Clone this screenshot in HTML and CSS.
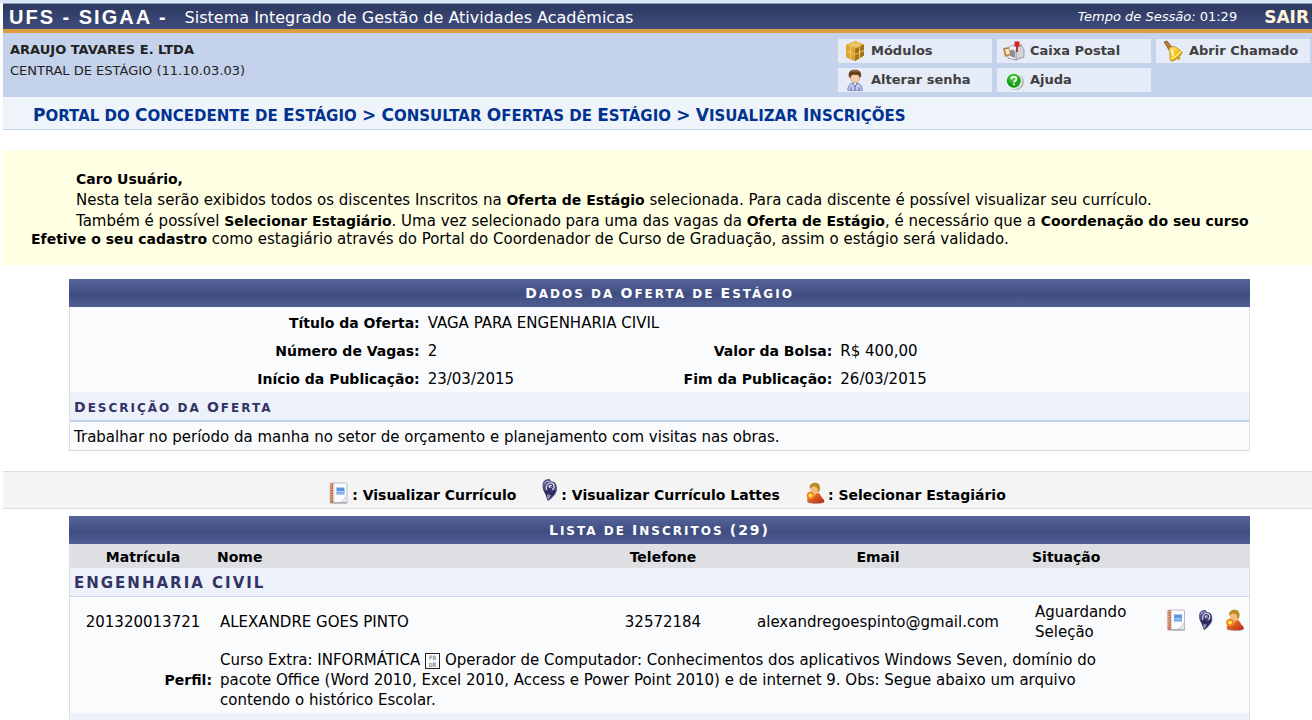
FILE: index.html
```html
<!DOCTYPE html>
<html lang="pt-BR">
<head>
<meta charset="utf-8">
<title>UFS - SIGAA</title>
<link rel="stylesheet" href="styles.css">
</head>
<body>
<svg class="defs" aria-hidden="true">
  <defs>
    <linearGradient id="gold" x1="0" y1="0" x2="1" y2="1"><stop offset="0" stop-color="#fff08a"/><stop offset=".5" stop-color="#f2c418"/><stop offset="1" stop-color="#b98300"/></linearGradient>
    <linearGradient id="violet" x1="0" y1="0" x2="1" y2="1"><stop offset="0" stop-color="#7474a4"/><stop offset=".5" stop-color="#2c2c62"/><stop offset="1" stop-color="#9d9dc0"/></linearGradient>
    <radialGradient id="green" cx=".45" cy=".3"><stop offset="0" stop-color="#5fe04a"/><stop offset="1" stop-color="#149a1c"/></radialGradient>
    <linearGradient id="red" x1="0" y1="0" x2="1" y2="1"><stop offset="0" stop-color="#f7883c"/><stop offset="1" stop-color="#b52a0c"/></linearGradient>
    <symbol id="i-note" viewBox="0 0 20 22">
      <rect x="3.5" y="1" width="15.5" height="20" rx="1" fill="#fafcff" stroke="#b9bcc6"/>
      <path d="M2 20.8h17.3" stroke="#a9abb5" stroke-width="1.4"/>
      <rect x="2" y="1" width="3.4" height="19.6" fill="#c9784f"/>
      <path d="M1 2.500h3M1 5h3M1 7.500h3M1 10h3M1 12.500h3M1 15h3M1 17.500h3" stroke="#d8c3b0" stroke-width="1"/>
      <path d="M6 2v18" stroke="#dedfe5"/>
      <rect x="8.500" y="5.500" width="8" height="7" fill="#5d93df"/>
      <path d="M9 9.500h7M9 11h7" stroke="#a9cbf5"/>
      <path d="M12.500 20l6-6.500v6.500z" fill="#e4e8ea"/>
      <path d="M12.500 19.500c3 0 4-3 6-6" fill="none" stroke="#cfd4d8"/>
    </symbol>
    <symbol id="i-lattes" viewBox="0 0 16 24">
      <path d="M1 7C1 3 4 1 7.500 1c1.500 0 1 2 3 2.500C14 4 15.500 7 15.500 11c0 5-4 8-8.500 12-2-1-2-4-2.500-7C2 13 .5 10 1 7z" fill="url(#violet)"/>
      <path d="M3 6c1-2.500 4-3.500 6-2" fill="none" stroke="#c4c4dc" stroke-width="1"/>
      <path d="M5 12C4 7 7 4.500 10 5c3.500.8 3.500 5.500.5 6.500" fill="none" stroke="#d4d4e8" stroke-width="1.300"/>
      <circle cx="9" cy="8.500" r="1.800" fill="#e8e8f4"/>
      <circle cx="9.500" cy="8.800" r=".9" fill="#26265b"/>
      <path d="M1.500 11c2 2 2.500 2.500 4.500 3 3 1 6-1 8.500-3l-1 4-5 6-2 1z" fill="#29295e"/>
      <path d="M6 16c-1 2-.5 4 .5 6 1.500-1.500 2.500-3 3-5" fill="#8a8ab0"/>
    </symbol>
    <symbol id="i-user" viewBox="0 0 20 22">
      <ellipse cx="11" cy="20" rx="8.500" ry="1.800" fill="#6f2417" opacity=".5"/>
      <path d="M2.500 20C1 15 6 10.500 11 10.500c4 0 5 3.500 6 5.500 2 1 2.500 2.500 2 4-3 1.600-13 1.600-16.500 0z" fill="url(#red)"/>
      <ellipse cx="10" cy="6.500" rx="4.700" ry="5.500" fill="#f3bd82"/>
      <path d="M5 7C3.500 3 7 .5 10.500.8c4 .3 5.500 4 4 8.200-1 1.500-2 1.200-1.800-.5C13 5 10 4.500 8 4.500 6.500 5 6 6 5 7z" fill="#bd8b24"/>
      <path d="M5.500 9l-1 6 3 2 3.500-5z" fill="#f7b06a"/>
      <circle cx="5.500" cy="13.500" r="3.800" fill="#f68322"/>
      <circle cx="5.500" cy="13.500" r="2" fill="#ffe54d"/>
    </symbol>
    <symbol id="i-box" viewBox="0 0 20 22">
      <path d="M1 5l9-4 9 3.500v11L10 21 1 17z" fill="#c08a1a"/>
      <path d="M1 5l9-4 9 3.500-8.500 4z" fill="#e6bd55"/>
      <path d="M1 5l9.500 3.500L10 21l-9-4z" fill="#dca62e"/>
      <path d="M10.500 8.500L19 4.500v11L10 21z" fill="#a2721a"/>
      <path d="M1.500 11l9 3.500L19 10.500M5.500 3l9 3.500v12M14.500 3L5.500 6.500v12" fill="none" stroke="#efd07a" stroke-width=".9"/>
    </symbol>
    <symbol id="i-mail" viewBox="0 0 22 20">
      <path d="M10 7c1-3 9-4 11 1v8l-8 3z" fill="#d3d3d9" stroke="#85858d" stroke-width=".7"/>
      <path d="M5 8c1-3 4-4 7-3l7-1c-4 1-6 3-6 6v9l-8-2z" fill="#f4f4f6" stroke="#8b8c95" stroke-width=".8"/>
      <path d="M7 10c1-2 4-2 5 1v6l-5-2z" fill="#8e909b"/>
      <path d="M0 7l6-1 2 8-6 2z" fill="#b98343"/>
      <path d="M2 8.500l3.500-.8 1.500 5-3.500 1z" fill="#f4e8d0"/>
      <path d="M14 11V1" stroke="#a80d0d" stroke-width="1.500"/>
      <path d="M11.500.5h5v5h-5z" fill="#df1f22"/>
    </symbol>
    <symbol id="i-bell" viewBox="0 0 20 22">
      <path d="M1 2l3-1 5 6-3 3z" fill="#b77d3a" stroke="#815019" stroke-width=".7"/>
      <path d="M6 9c2-3 6-3 8-1l5 4c1 2-8 10-11 9-2-2 0-6-2-12z" fill="url(#gold)" stroke="#b07b09" stroke-width=".7"/>
      <path d="M8 19c3-1 8-5 10-8" fill="none" stroke="#fff2a0" stroke-width="1.300"/>
      <circle cx="15.500" cy="18" r="1.800" fill="#d39b13"/>
      <path d="M8.500 10c1.500 2 1.500 4 1.500 6" stroke="#fffbd0" stroke-width="1.600" fill="none"/>
    </symbol>
    <symbol id="i-person" viewBox="0 0 18 22">
      <path d="M2 22c-.5-5 2-8 7-8s7.500 3 7 8z" fill="#c3ccf0" stroke="#6a76b8"/>
      <path d="M7 14l2 4 2-4M9 18v4M5 18v4M13 18v4" stroke="#5a67b0" fill="#fff"/>
      <ellipse cx="9" cy="8.500" rx="4.600" ry="5.300" fill="#f5cdaa" stroke="#b68259" stroke-width=".5"/>
      <path d="M3 8C1.500 3 5 .5 9 .7c4 0 7 2.300 6 7l-1.500 1C13 6 12 5.500 9 6 6.500 5.500 5 6 4.500 9z" fill="#66411f"/>
      <path d="M6 2.500c2-1 4-.8 6 0" stroke="#a47a4d" fill="none"/>
    </symbol>
    <symbol id="i-help" viewBox="0 0 22 22">
      <circle cx="13" cy="13" r="8" fill="#b5babd"/>
      <circle cx="11" cy="12" r="8" fill="#f3f7f2"/>
      <circle cx="10.800" cy="11.800" r="7" fill="url(#green)"/>
      <path d="M8.300 10.300c0-3.500 5.200-3.200 5.200-.4 0 1.800-2.500 1.900-2.500 3.600M11 14.500v1.800" fill="none" stroke="#fff" stroke-width="1.700"/>
    </symbol>
  </defs>
</svg>

<div class="page">
  <header>
    <div class="titlebar">
      <h1><span class="brand">UFS - SIGAA -</span> <span class="system">Sistema Integrado de Gestão de Atividades Acadêmicas</span></h1>
      <div class="session"><span><em>Tempo de Sessão:</em> 01:29</span> <a href="#sair">SAIR</a></div>
    </div>
    <div class="userpanel">
      <div class="userinfo">
        <strong>ARAUJO TAVARES E. LTDA</strong>
        <span>CENTRAL DE ESTÁGIO (11.10.03.03)</span>
      </div>
      <nav class="menu">
        <a href="#modulos"><svg><use href="#i-box"/></svg>Módulos</a>
        <a href="#caixa"><svg><use href="#i-mail"/></svg>Caixa Postal</a>
        <a href="#chamado"><svg><use href="#i-bell"/></svg>Abrir Chamado</a>
        <a href="#senha"><svg><use href="#i-person"/></svg>Alterar senha</a>
        <a href="#ajuda"><svg><use href="#i-help"/></svg>Ajuda</a>
      </nav>
    </div>
  </header>

  <h2 class="crumbs"><a href="#portal"><span class="cap">Portal</span> <span>do</span> <span class="cap">Concedente</span> <span>de</span> <span class="cap">Estágio</span></a> <b>&gt;</b> <span class="cap">Consultar</span> <span class="cap">Ofertas</span> <span>de</span> <span class="cap">Estágio</span> <b>&gt;</b> <span class="cap">Visualizar</span> <span class="cap">Inscrições</span></h2>

  <main>
    <div class="notice">
      <p><b>Caro Usuário,</b></p>
      <p>Nesta tela serão exibidos todos os discentes Inscritos na <b>Oferta de Estágio</b> selecionada. Para cada discente é possível visualizar seu currículo.</p>
      <p>Também é possível <b>Selecionar Estagiário</b>. Uma vez selecionado para uma das vagas da <b>Oferta de Estágio</b>, é necessário que a <b>Coordenação do seu curso Efetive o seu cadastro</b> como estagiário através do Portal do Coordenador de Curso de Graduação, assim o estágio será validado.</p>
    </div>

    <table class="grid offer">
      <caption><span class="cap">Dados</span> <span>da</span> <span class="cap">Oferta</span> <span>de</span> <span class="cap">Estágio</span></caption>
      <colgroup><col class="w30"><col class="w15"><col class="w20"><col class="w35"></colgroup>
      <tbody>
        <tr class="first"><th scope="row">Título da Oferta:</th><td colspan="3">VAGA PARA ENGENHARIA CIVIL</td></tr>
        <tr><th scope="row">Número de Vagas:</th><td>2</td><th scope="row">Valor da Bolsa:</th><td>R$ 400,00</td></tr>
        <tr><th scope="row">Início da Publicação:</th><td>23/03/2015</td><th scope="row">Fim da Publicação:</th><td>26/03/2015</td></tr>
        <tr class="sub thick"><td colspan="4"><span class="cap">Descrição</span> <span>da</span> <span class="cap">Oferta</span></td></tr>
        <tr><td colspan="4">Trabalhar no período da manha no setor de orçamento e planejamento com visitas nas obras.</td></tr>
      </tbody>
    </table>

    <div class="legend">
      <span><svg><use href="#i-note"/></svg>: Visualizar Currículo</span>
      <span><svg class="narrow"><use href="#i-lattes"/></svg>: Visualizar Currículo Lattes</span>
      <span><svg class="person"><use href="#i-user"/></svg>: Selecionar Estagiário</span>
    </div>

    <table class="grid list">
      <caption><span class="cap">Lista</span> <span>de</span> <span class="cap">Inscritos</span> <b>(29)</b></caption>
      <colgroup><col class="c-id"><col><col class="c-tel"><col class="c-mail"><col class="c-sit"><col class="c-act"></colgroup>
      <thead>
        <tr><th>Matrícula</th><th class="left">Nome</th><th>Telefone</th><th>Email</th><th class="left">Situação</th><th></th></tr>
      </thead>
      <tbody>
        <tr class="sub"><td colspan="6">ENGENHARIA CIVIL</td></tr>
        <tr class="student">
          <td class="center">201320013721</td><td>ALEXANDRE GOES PINTO</td><td class="center">32572184</td><td class="center">alexandregoespinto@gmail.com</td><td>Aguardando Seleção</td>
          <td><div class="actions">
            <a href="#curriculo" aria-label="Visualizar Currículo"><svg><use href="#i-note"/></svg></a>
            <a href="#lattes" aria-label="Visualizar Currículo Lattes"><svg><use href="#i-lattes"/></svg></a>
            <a href="#selecionar" aria-label="Selecionar Estagiário"><svg><use href="#i-user"/></svg></a>
          </div></td>
        </tr>
        <tr class="profile">
          <th scope="row">Perfil:</th>
          <td colspan="4">Curso Extra: INFORMÁTICA <span class="hexbox"><span>F0</span><span>D8</span></span> Operador de Computador: Conhecimentos dos aplicativos Windows Seven, domínio do pacote Office (Word 2010, Excel 2010, Access e Power Point 2010) e de internet 9. Obs: Segue abaixo um arquivo contendo o histórico Escolar.</td>
          <td></td>
        </tr>
        <tr class="next"><td colspan="6"></td></tr>
      </tbody>
    </table>
  </main>
</div>
</body>
</html>
```
FILE: styles.css
```css
* { box-sizing: border-box; }
html { overflow: hidden; }
body {
  margin: 0;
  border-top: 3px solid #d9e8f6;
  background: #fff;
  color: #000;
  font: 15px/18px Verdana, "DejaVu Sans", sans-serif;
}
a { color: inherit; text-decoration: none; }
p, h1, h2 { margin: 0; }
.defs { position: absolute; width: 0; height: 0; }
.page { margin-left: 3px; }

.titlebar {
  display: flex;
  justify-content: space-between;
  align-items: center;
  height: 30px;
  padding: 0 3px 0 6px;
  border-top: 1px solid #8d9bb5;
  border-bottom: 4px solid #dc9c40;
  background: linear-gradient(#2c395f, #404b7e);
  color: #fff;
}
h1 { display: flex; align-items: center; gap: 17px; font-weight: normal; }
.brand { font: bold 20px/24px "Liberation Sans", Arial, sans-serif; letter-spacing: 2px; }
.system { padding-top: 2px; font-size: 16px; }
.session { display: flex; align-items: center; gap: 27px; font-size: 13px; }
.session a { font-size: 17px; font-weight: bold; color: #fff3d8; }

.userpanel {
  display: flex;
  justify-content: space-between;
  padding: 6px 2px 5px 7px;
  background: #c4d2eb;
  color: #222;
  font-size: 13px;
}
.userinfo { display: flex; flex-direction: column; gap: 3px; padding-top: 2px; }
.menu { display: grid; grid-template-columns: repeat(3, 154px); gap: 5px; }
.menu a {
  display: flex;
  align-items: center;
  gap: 5px;
  height: 24px;
  padding-left: 6px;
  background: #e5ebf7;
  color: #404040;
  font-weight: bold;
}
.menu svg { width: 22px; height: 22px; }

.cap, .crumbs span, caption span, .sub span { display: inline-block; text-transform: uppercase; }
.crumbs {
  padding: 9px 30px 4px;
  border-bottom: 1px solid #c4d2eb;
  background: #eff3fa;
  color: #003390;
  font-size: 15px;
  line-height: 18px;
}
.crumbs .cap::first-letter, .crumbs b { font-size: 17px; }

.notice {
  margin: 20px 0 14px;
  padding: 20px 28px 17px;
  background: #ffffe4;
}
.notice p { text-indent: 45px; }
.notice p + p { margin-top: 3px; }
.notice b { font-size: 14px; }

.grid {
  width: calc(100% - 128px);
  margin: 0 62px 0 66px;
  border: 1px solid #dedfe3;
  border-top: 0;
  border-collapse: separate;
  border-spacing: 0;
  table-layout: fixed;
  background: #fafbfd;
}
caption {
  height: 28px;
  padding-top: 1px;
  background: linear-gradient(#56649a, #404d80 55%, #505e94);
  color: #fff;
  font-size: 12px;
  font-weight: bold;
  line-height: 27px;
  letter-spacing: 2px;
}
.cap::first-letter, caption b { font-size: 14px; }
.grid td, .grid th { padding: 2px 4px 0; }
.grid th { font-size: 14px; }
.offer td, .offer th { height: 28px; }
.offer .first td, .offer .first th { height: 29px; padding-top: 3px; }
.offer th { text-align: right; }
.w30 { width: 30%; }
.w15 { width: 15%; }
.w20 { width: 20%; }
.w35 { width: 35%; }
.grid .sub td {
  height: 29px;
  border-bottom: 1px solid #c4d2eb;
  background: #ecf1fa;
  color: #333366;
  font-weight: bold;
  letter-spacing: 2px;
}
.grid .thick td { height: 30px; border-bottom-width: 2px; font-size: 12px; }

.legend {
  display: flex;
  justify-content: center;
  gap: 25px;
  height: 38px;
  margin: 20px 0 7px;
  padding: 10px 0 0 18px;
  border: solid #dedede;
  border-width: 1px 0;
  background: #f4f4f4;
  font-size: 14px;
  font-weight: bold;
}
.legend span { display: flex; align-items: center; gap: 3px; }
.legend svg { width: 22px; height: 22px; margin-bottom: 4px; }
.legend .narrow { width: 17px; height: 24px; margin-bottom: 10px; }
.legend .person { width: 20px; }

.c-id { width: 146px; }
.c-tel { width: 124px; }
.c-mail { width: 306px; }
.c-sit { width: 130px; }
.c-act { width: 88px; }
.list thead th { height: 24px; padding: 1px 0 0; background: #dedfe3; }
.list thead .left { padding-left: 1px; text-align: left; }
.center { text-align: center; }
.list .student td { height: 50px; padding-top: 0; line-height: 20px; }
.actions { display: flex; justify-content: space-between; padding-bottom: 4px; }
.actions svg { display: block; width: 21px; height: 22px; }
.profile th { text-align: right; }
.list .profile td, .list .profile th { height: 66px; padding: 0 4px 0; line-height: 20px; }
.list .profile td { padding-right: 34px; }
.next td { height: 28px; background: #ecf1fa; }
.hexbox {
  display: inline-flex;
  flex-direction: column;
  padding: 0 3px;
  border: 1px solid #222;
  color: #555;
  font: 6px/7px "DejaVu Sans Mono", monospace;
  vertical-align: middle;
}
```
